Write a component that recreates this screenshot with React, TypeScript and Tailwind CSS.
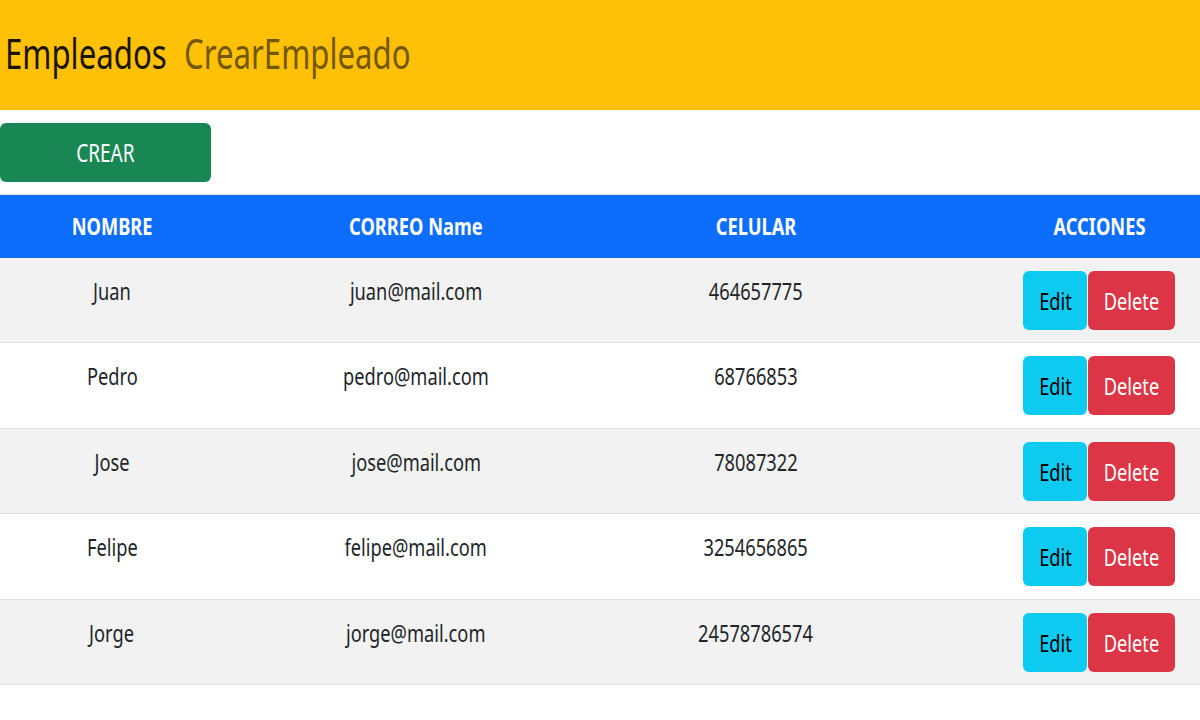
const empleados = [
  { nombre: "Juan", correo: "juan@mail.com", celular: "464657775" },
  { nombre: "Pedro", correo: "pedro@mail.com", celular: "68766853" },
  { nombre: "Jose", correo: "jose@mail.com", celular: "78087322" },
  { nombre: "Felipe", correo: "felipe@mail.com", celular: "3254656865" },
  { nombre: "Jorge", correo: "jorge@mail.com", celular: "24578786574" },
];

// the screenshot is squeezed sideways, so text is drawn narrow
function Narrow({ children, left }: { children: React.ReactNode; left?: boolean }) {
  return (
    <span className={`inline-block whitespace-nowrap scale-x-[0.76] ${left ? "origin-left" : "origin-center"}`}>
      {children}
    </span>
  );
}

export default function App() {
  return (
    <div className="w-[1200px] h-[720px] bg-white text-[#212529] font-['Noto_Sans',sans-serif] overflow-hidden">
      {/* Navbar */}
      <nav className="h-[110px] bg-[#ffc107] flex items-center pl-[5px] pb-[4px]">
        <a className="text-[41px] text-[#1a1400] leading-none">
          <Narrow left>Empleados</Narrow>
        </a>
        <a className="text-[41px] text-[#735703] leading-none -ml-[34px]">
          <Narrow left>CrearEmpleado</Narrow>
        </a>
      </nav>

      {/* Crear */}
      <div className="pt-[13px] pb-[12px]">
        <button className="w-[211px] h-[59px] bg-[#198754] rounded-md text-white text-[25px] leading-none">
          <Narrow>CREAR</Narrow>
        </button>
      </div>

      {/* Table */}
      <div className="border-t border-[#dee2e6]">
        <div className="flex h-[63px] bg-[#0d6efd] text-white font-bold text-[24px] items-center pb-[2px]">
          <div className="w-[224px] text-center"><Narrow>NOMBRE</Narrow></div>
          <div className="w-[384px] text-center"><Narrow>CORREO Name</Narrow></div>
          <div className="w-[296px] text-center"><Narrow>CELULAR</Narrow></div>
          <div className="ml-auto w-[202px] text-center"><Narrow>ACCIONES</Narrow></div>
        </div>

        {empleados.map((e, i) => (
          <div
            key={e.nombre}
            className={`flex border-b border-[#dee2e6] text-[24px] leading-[36px] ${i % 2 === 0 ? "h-[85px] bg-[#f2f2f2]" : "h-[86px] bg-white"}`}
          >
            <div className="w-[224px] text-center pt-[15px]"><Narrow>{e.nombre}</Narrow></div>
            <div className="w-[384px] text-center pt-[15px]"><Narrow>{e.correo}</Narrow></div>
            <div className="w-[296px] text-center pt-[15px]"><Narrow>{e.celular}</Narrow></div>
            <div className="ml-auto w-[202px] flex justify-center gap-px pt-[13px]">
              <button className="w-[64px] h-[59px] bg-[#0dcaf0] rounded-md text-black text-[24px] leading-none">
                <Narrow>Edit</Narrow>
              </button>
              <button className="w-[87px] h-[59px] bg-[#dc3545] rounded-md text-white text-[24px] leading-none">
                <Narrow>Delete</Narrow>
              </button>
            </div>
          </div>
        ))}
      </div>
    </div>
  );
}
